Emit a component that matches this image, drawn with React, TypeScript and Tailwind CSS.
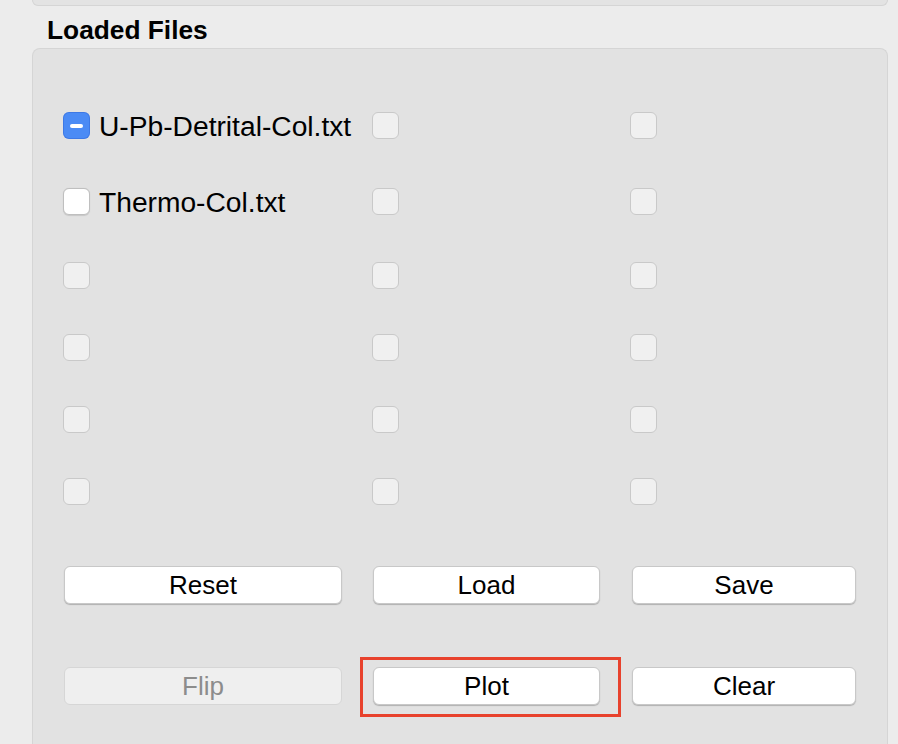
import React from "react";

function Box({ kind }: { kind: "blank" | "white" | "mixed" }) {
  if (kind === "mixed") {
    return (
      <div className="flex h-[27px] w-[27px] shrink-0 items-center justify-center rounded-[6px] bg-[#4b8bf5] shadow-[inset_0_0_0_1px_rgba(40,90,200,0.35)]">
        <div className="h-[4px] w-[13px] rounded-full bg-white" />
      </div>
    );
  }
  if (kind === "white") {
    return (
      <div className="h-[27px] w-[27px] shrink-0 rounded-[6px] border border-[#bfbfbf] bg-white shadow-[0_0.5px_1px_rgba(0,0,0,0.12)]" />
    );
  }
  return (
    <div className="h-[27px] w-[27px] shrink-0 rounded-[6px] border border-[#c9c9c9] bg-[#f0f0f0]" />
  );
}

function Btn({
  label,
  w,
  disabled,
}: {
  label: string;
  w: string;
  disabled?: boolean;
}) {
  return (
    <div
      className={
        disabled
          ? `${w} flex h-[38px] items-center justify-center rounded-[6px] border border-[#d6d6d6] bg-[#efefef] text-[26px] leading-none text-[#8c8c8c]`
          : `${w} flex h-[38px] items-center justify-center rounded-[6px] border border-[#c8c8c8] bg-white text-[26px] leading-none text-black shadow-[0_1px_1px_rgba(0,0,0,0.22)]`
      }
    >
      {label}
    </div>
  );
}

export default function App() {
  const rows: { kind: "blank" | "white" | "mixed"; label?: string; mt: string }[] = [
    { kind: "mixed", label: "U-Pb-Detrital-Col.txt", mt: "mt-0" },
    { kind: "white", label: "Thermo-Col.txt", mt: "mt-[49px]" },
    { kind: "blank", mt: "mt-[47px]" },
    { kind: "blank", mt: "mt-[45px]" },
    { kind: "blank", mt: "mt-[45px]" },
    { kind: "blank", mt: "mt-[45px]" },
  ];
  return (
    <div className="h-[744px] w-[898px] overflow-hidden bg-[#ececec] font-['Liberation_Sans',Arial,sans-serif] text-black">
      <div className="ml-[32px] h-[6px] w-[856px] rounded-b-[8px] border border-t-0 border-[#d5d5d5] bg-[#e3e3e3]" />
      <div className="ml-[47px] mt-[11px] h-[26px] text-[26.3px] font-bold leading-[26px] text-black">
        Loaded Files
      </div>
      <div className="ml-[32px] mt-[5px] h-[720px] w-[856px] rounded-t-[8px] border border-b-0 border-[#d5d5d5] bg-[#e2e2e2] pl-[30px] pt-[63px]">
        <div className="flex flex-col">
          {rows.map((r, i) => (
            <div key={i} className={`${r.mt} flex h-[27px] items-center`}>
              <div className="flex w-[309px] items-center gap-[9px]">
                <Box kind={r.kind} />
                {r.label && (
                  <span className="whitespace-nowrap text-[28.2px] leading-[28px] text-black">
                    {r.label}
                  </span>
                )}
              </div>
              <div className="w-[258px]">
                <Box kind="blank" />
              </div>
              <div>
                <Box kind="blank" />
              </div>
            </div>
          ))}
        </div>
        <div className="mt-[61px] flex pl-[1px]">
          <Btn label="Reset" w="w-[278px]" />
          <div className="ml-[31px]">
            <Btn label="Load" w="w-[227px]" />
          </div>
          <div className="ml-[32px]">
            <Btn label="Save" w="w-[224px]" />
          </div>
        </div>
        <div className="mt-[63px] flex pl-[1px]">
          <Btn label="Flip" w="w-[278px]" disabled />
          <div className="relative ml-[31px]">
            <Btn label="Plot" w="w-[227px]" />
            <div className="pointer-events-none absolute left-[-13px] top-[-10px] h-[60px] w-[261px] border-[3px] border-[#e8422d]" />
          </div>
          <div className="ml-[32px]">
            <Btn label="Clear" w="w-[224px]" />
          </div>
        </div>
      </div>
    </div>
  );
}
